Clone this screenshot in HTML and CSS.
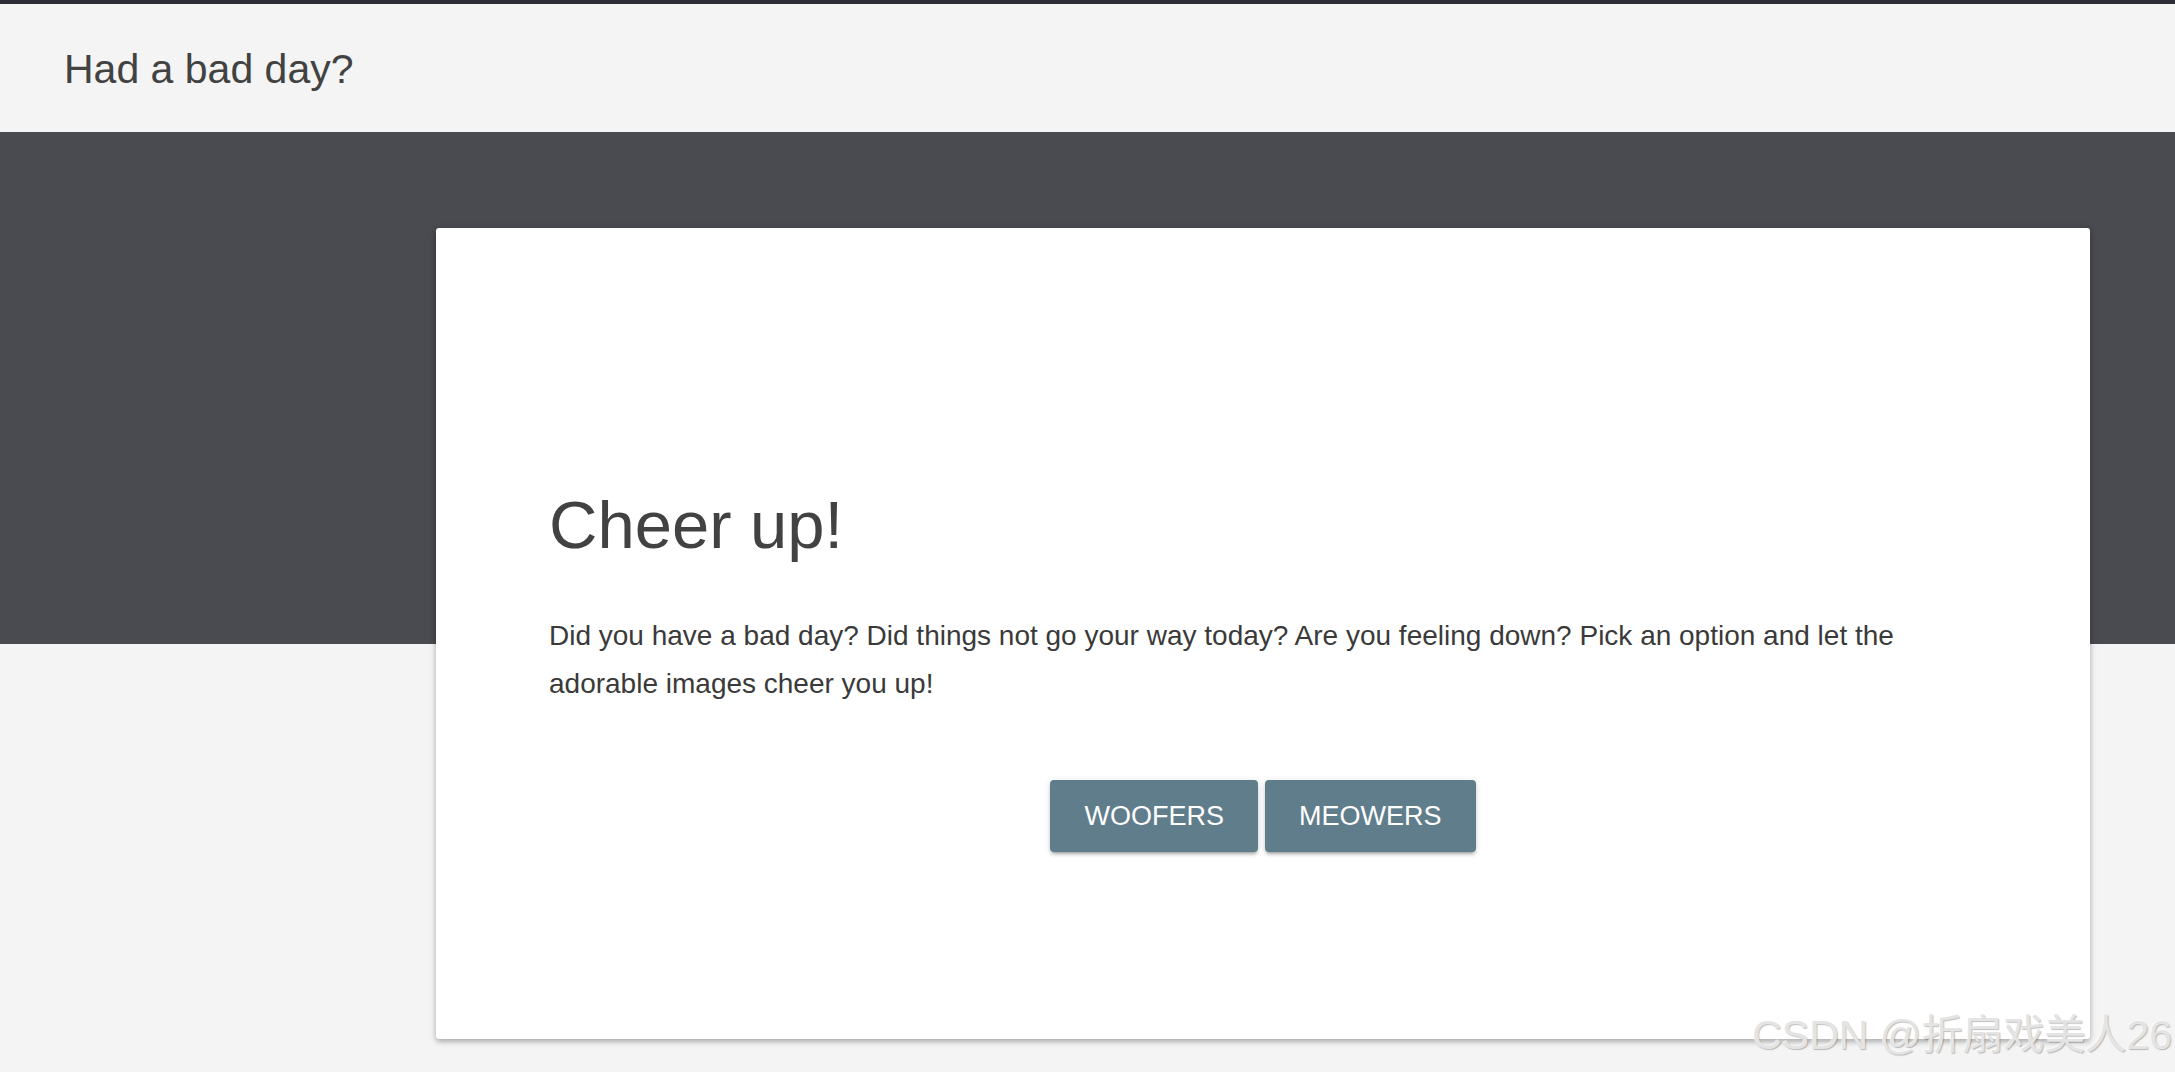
FILE: index.html
```html
<!DOCTYPE html>
<html lang="en">
<head>
<meta charset="utf-8">
<title>Had a bad day?</title>
<link rel="stylesheet" href="styles.css">
</head>
<body>
<div class="page">
  <header class="header">
    <span class="title">Had a bad day?</span>
  </header>
  <main class="main">
    <section class="card">
      <h1 class="headline">Cheer up!</h1>
      <p class="text">Did you have a bad day? Did things not go your way today? Are you feeling down? Pick an option and let the adorable images cheer you up!</p>
      <div class="actions">
        <button class="btn">WOOFERS</button>
        <button class="btn">MEOWERS</button>
      </div>
    </section>
  </main>
  <div class="watermark">CSDN @折扇戏美人26</div>
</div>
</body>
</html>
```
FILE: styles.css
```css
html, body {
  margin: 0;
  padding: 0;
}
body {
  background: #f4f4f4;
  font-family: "Liberation Sans", Arial, "Noto Sans CJK SC", sans-serif;
  color: #444;
}
.page {
  position: relative;
  min-height: 1072px;
  border-top: 4px solid #2c2c34;
  box-sizing: border-box;
}
.header {
  height: 128px;
  display: flex;
  align-items: center;
  padding: 3px 0 0 64px;
  box-sizing: border-box;
  background: #f4f4f4;
}
.title {
  font-size: 41px;
  line-height: 47px;
  color: #424242;
}
.main {
  background: linear-gradient(#4a4b50 0, #4a4b50 512px, #f4f4f4 512px);
  padding: 96px 85px 33px 436px;
}
.card {
  background: #fff;
  border-radius: 3px;
  box-shadow: 0 3px 5px rgba(0,0,0,0.22), 0 1px 9px rgba(0,0,0,0.12);
  padding: 257px 113px 187px 113px;
}
.headline {
  margin: 0;
  font-size: 67px;
  line-height: 80px;
  font-weight: 400;
  color: #424242;
}
.text {
  margin: 47px 0 0 0;
  font-size: 28px;
  line-height: 48px;
  color: #3a3a3a;
}
.actions {
  margin-top: 72px;
  display: flex;
  justify-content: center;
  gap: 7px;
}
.btn {
  height: 72px;
  padding: 0 34px;
  border: none;
  border-radius: 4px;
  background: #607d8b;
  color: #fff;
  font-family: "Liberation Sans", Arial, sans-serif;
  font-size: 27px;
  line-height: 72px;
  box-shadow: 0 3px 3px rgba(0,0,0,0.14), 0 4px 2px -3px rgba(0,0,0,0.2), 0 1px 7px rgba(0,0,0,0.12);
  cursor: pointer;
}
.watermark {
  position: absolute;
  right: 3px;
  bottom: 16px;
  font-size: 41px;
  line-height: 41px;
  color: #e4e4e4;
  text-shadow: 1px 1px 1px rgba(0,0,0,0.25), -1px -1px 0 rgba(255,255,255,0.6);
  white-space: nowrap;
  font-family: "Liberation Sans", Arial, "Noto Sans CJK SC", sans-serif;
}
```
